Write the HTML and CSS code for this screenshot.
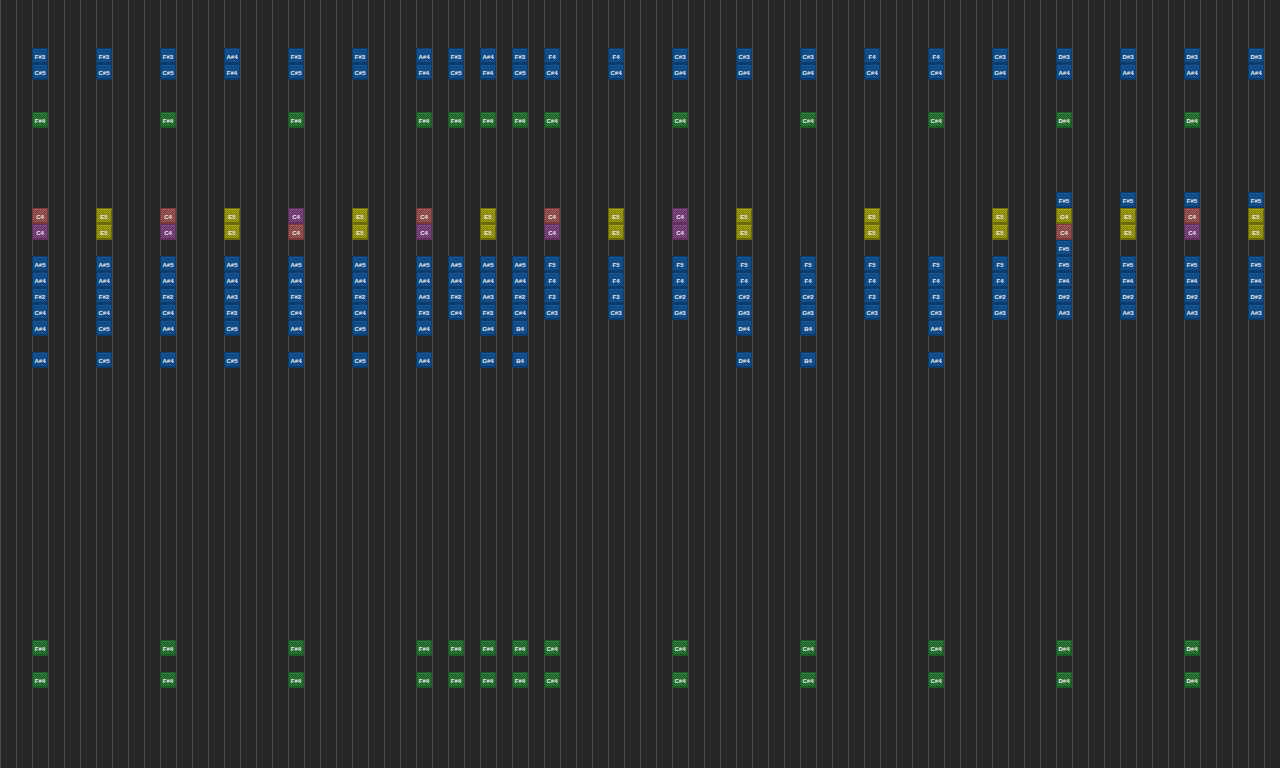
FILE: index.html
```html
<!DOCTYPE html>
<html lang="en">
<head>
    <meta charset="UTF-8">
    <meta name="viewport" content="width=device-width, initial-scale=1.0">
    <title>Note Block Song</title>
    <link rel="stylesheet" href="styles.css">
</head>
<body>
    <main class="song" id="song"></main>
    <script src="script.js"></script>
</body>
</html>
```
FILE: styles.css
```css
* {
    box-sizing: border-box;
}
body {
    margin: 0;
    overflow: hidden;
    background-color: #272729;
}
.song {
    display: grid;
    grid-auto-columns: 16px;
    grid-auto-rows: 16px;
    min-height: 100vh;
    align-content: start;
    background-image: repeating-linear-gradient(90deg, #4a4a4b 0 1px, transparent 1px 16px);
}
.note {
    display: flex;
    align-items: center;
    justify-content: center;
    padding-top: 2px;
    border: 1px solid var(--edge);
    color: #eceef0;
    font: bold 6px/6px "Liberation Sans", Arial, sans-serif;
    background:
        linear-gradient(var(--light), var(--light)) top / 100% 1px no-repeat,
        linear-gradient(var(--edge), var(--edge)) bottom / 100% 1px no-repeat,
        repeating-conic-gradient(var(--dark) 0 25%, var(--light) 0 50%) 0 0 / 2px 2px;
}
.harp {
    --edge: #0d3c6b;
    --light: #14569a;
    --dark: #0f4378;
}
.bass {
    --edge: #1e5a28;
    --light: #2f7d3a;
    --dark: #205c2a;
}
.drum {
    --edge: #783a3a;
    --light: #a05a58;
    --dark: #7c4242;
}
.snare {
    --edge: #6b6b0c;
    --light: #a8a612;
    --dark: #7a790c;
}
.click {
    --edge: #60305f;
    --light: #824882;
    --dark: #643464;
}
```
FILE: script.js
```js
const song = document.getElementById("song");

// first letter: h = harp, b = bass, d = drum, s = snare, c = click
const instruments = { h: "harp", b: "bass", d: "drum", s: "snare", c: "click" };

// layer number -> "tick:note" list
const layers = {
    3: "h 2:F#3 6:F#3 10:F#3 14:A#4 18:F#3 22:F#3 26:A#4 28:F#3 30:A#4 32:F#3 34:F4 38:F4 42:C#3 46:C#3 50:C#3 54:F4 58:F4 62:C#3 66:D#3 70:D#3 74:D#3 78:D#3",
    4: "h 2:C#5 6:C#5 10:C#5 14:F#4 18:C#5 22:C#5 26:F#4 28:C#5 30:F#4 32:C#5 34:C#4 38:C#4 42:G#4 46:G#4 50:G#4 54:C#4 58:C#4 62:G#4 66:A#4 70:A#4 74:A#4 78:A#4",
    7: "b 2:F#4 10:F#4 18:F#4 26:F#4 28:F#4 30:F#4 32:F#4 34:C#4 42:C#4 50:C#4 58:C#4 66:D#4 74:D#4",
    12: "h 66:F#5 70:F#5 74:F#5 78:F#5",
    13: "d 2:C4 10:C4 26:C4 34:C4 74:C4 c 18:C4 42:C4 s 6:E5 14:E5 22:E5 30:E5 38:E5 46:E5 54:E5 62:E5 66:G4 70:E5 78:E5",
    14: "c 2:C4 10:C4 26:C4 34:C4 42:C4 74:C4 d 18:C4 66:C4 s 6:E5 14:E5 22:E5 30:E5 38:E5 46:E5 54:E5 62:E5 70:E5 78:E5",
    15: "h 66:F#5",
    16: "h 2:A#5 6:A#5 10:A#5 14:A#5 18:A#5 22:A#5 26:A#5 28:A#5 30:A#5 32:A#5 34:F5 38:F5 42:F5 46:F5 50:F5 54:F5 58:F5 62:F5 66:F#5 70:F#5 74:F#5 78:F#5",
    17: "h 2:A#4 6:A#4 10:A#4 14:A#4 18:A#4 22:A#4 26:A#4 28:A#4 30:A#4 32:A#4 34:F4 38:F4 42:F4 46:F4 50:F4 54:F4 58:F4 62:F4 66:F#4 70:F#4 74:F#4 78:F#4",
    18: "h 2:F#2 6:F#2 10:F#2 14:A#3 18:F#2 22:F#2 26:A#3 28:F#2 30:A#3 32:F#2 34:F3 38:F3 42:C#2 46:C#2 50:C#2 54:F3 58:F3 62:C#2 66:D#2 70:D#2 74:D#2 78:D#2",
    19: "h 2:C#4 6:C#4 10:C#4 14:F#3 18:C#4 22:C#4 26:F#3 28:C#4 30:F#3 32:C#4 34:C#3 38:C#3 42:G#3 46:G#3 50:G#3 54:C#3 58:C#3 62:G#3 66:A#3 70:A#3 74:A#3 78:A#3",
    20: "h 2:A#4 6:C#5 10:A#4 14:C#5 18:A#4 22:C#5 26:A#4 30:G#4 32:B4 46:D#4 50:B4 58:A#4",
    22: "h 2:A#4 6:C#5 10:A#4 14:C#5 18:A#4 22:C#5 26:A#4 30:G#4 32:B4 46:D#4 50:B4 58:A#4"
};

// the bass line is repeated on two low layers
layers[40] = layers[7];
layers[42] = layers[7];

for (const layer in layers) {
    let instrument = "harp";
    layers[layer].split(" ").forEach(item => {
        if (instruments[item]) {
            instrument = instruments[item];
            return;
        }
        const [tick, key] = item.split(":");
        const note = document.createElement("div");
        note.className = "note " + instrument;
        note.style.gridColumn = Number(tick) + 1;
        note.style.gridRow = Number(layer) + 1;
        note.innerText = key;
        song.appendChild(note);
    });
}
```
